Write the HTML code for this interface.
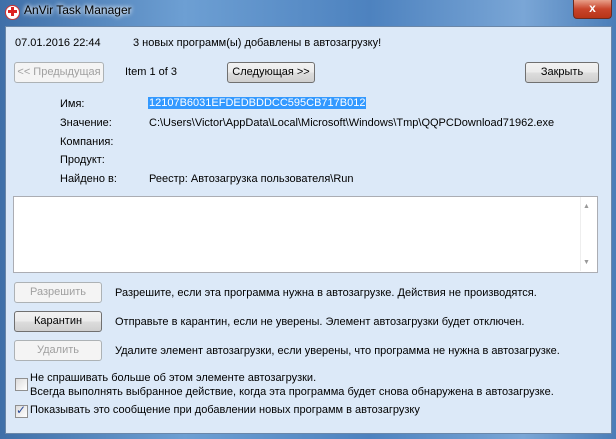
<!DOCTYPE html><html><head><meta charset="utf-8"><style>
body{margin:0;width:616px;height:439px;overflow:hidden;font-family:"Liberation Sans","DejaVu Sans",sans-serif;font-size:11px;color:#000;position:relative;background:linear-gradient(90deg,#3f6fa8,#6d9fd3 30%,#4d82bf 60%,#7aa6d6 85%,#4a7db8)}
.a{position:absolute;white-space:nowrap}
.client{position:absolute;left:5px;top:26px;width:605px;height:406px;background:#dce9f8;border:1px solid #6b87a8}
.btn{position:absolute;white-space:nowrap;border:1px solid #707070;border-radius:3px;background:linear-gradient(#f2f2f2,#ebebeb 50%,#dddddd 51%,#cfcfcf);text-align:center;line-height:19px;height:19px;box-sizing:content-box}
.dis{border-color:#adb2b5;background:#f4f4f4;color:#a0a0a0}
.cb{position:absolute;width:11px;height:11px;border:1px solid #8f8f8f;background:linear-gradient(135deg,#dcdcdc,#fff)}
</style></head><body>
<div class="a" style="left:5px;top:5px;width:13px;height:13px;border-radius:50%;background:#fff;border:1px solid #c33"></div>
<div class="a" style="left:8px;top:10px;width:9px;height:3px;background:#d22"></div>
<div class="a" style="left:11px;top:7px;width:3px;height:9px;background:#d22"></div>
<div class="a" style="left:24px;top:3px;font-size:12px;color:#000;text-shadow:0 0 6px #fff,0 0 4px #fff">AnVir Task Manager</div>
<div class="a" style="left:573px;top:0;width:37px;height:18px;border:1px solid #6b2a20;border-top:none;border-radius:0 0 4px 4px;background:linear-gradient(#e8a08a,#c9452b 50%,#b83418);color:#fff;font-weight:bold;text-align:center;line-height:17px;font-size:12px">x</div>
<div class="client"></div>
<div class="a" style="left:15px;top:37px">07.01.2016 22:44</div>
<div class="a" style="left:133px;top:37px">3 новых программ(ы) добавлены в автозагрузку!</div>
<div class="btn dis" style="left:14px;top:62px;width:88px">&lt;&lt; Предыдущая</div>
<div class="a" style="left:125px;top:66px">Item 1 of 3</div>
<div class="btn" style="left:227px;top:62px;width:86px">Следующая &gt;&gt;</div>
<div class="btn" style="left:525px;top:62px;width:72px">Закрыть</div>
<div class="a" style="left:60px;top:98px">Имя:</div>
<div class="a" style="left:148px;top:97px;background:#3399ff;color:#fff;padding:0 1px">12107B6031EFDEDBDDCC595CB717B012</div>
<div class="a" style="left:60px;top:117px">Значение:</div>
<div class="a" style="left:149px;top:117px">C:\Users\Victor\AppData\Local\Microsoft\Windows\Tmp\QQPCDownload71962.exe</div>
<div class="a" style="left:60px;top:136px">Компания:</div>
<div class="a" style="left:60px;top:154px">Продукт:</div>
<div class="a" style="left:60px;top:173px">Найдено в:</div>
<div class="a" style="left:149px;top:173px">Реестр: Автозагрузка пользователя\Run</div>
<div class="a" style="left:13px;top:196px;width:583px;height:75px;background:#fff;border:1px solid #abadb3"></div>
<div class="a" style="left:580px;top:197px;width:16px;height:74px;background:#fff;border-left:1px solid #eee"></div>
<div class="a" style="left:583px;top:203px;font-size:7px;color:#999">▲</div>
<div class="a" style="left:583px;top:259px;font-size:7px;color:#999">▼</div>
<div class="btn dis" style="left:14px;top:282px;width:86px">Разрешить</div>
<div class="a" style="left:115px;top:287px">Разрешите, если эта программа нужна в автозагрузке. Действия не производятся.</div>
<div class="btn" style="left:14px;top:311px;width:86px">Карантин</div>
<div class="a" style="left:115px;top:316px">Отправьте в карантин, если не уверены. Элемент автозагрузки будет отключен.</div>
<div class="btn dis" style="left:14px;top:340px;width:86px">Удалить</div>
<div class="a" style="left:115px;top:345px">Удалите элемент автозагрузки, если уверены, что программа не нужна в автозагрузке.</div>
<div class="cb" style="left:15px;top:378px"></div>
<div class="a" style="left:30px;top:372px">Не спрашивать больше об этом элементе автозагрузки.</div>
<div class="a" style="left:30px;top:386px">Всегда выполнять выбранное действие, когда эта программа будет снова обнаружена в автозагрузке.</div>
<div class="cb" style="left:15px;top:405px"></div>
<div class="a" style="left:16px;top:403px;color:#2a4a9a;font-size:12px;font-weight:bold">✓</div>
<div class="a" style="left:30px;top:404px">Показывать это сообщение при добавлении новых программ в автозагрузку</div>
</body></html>
